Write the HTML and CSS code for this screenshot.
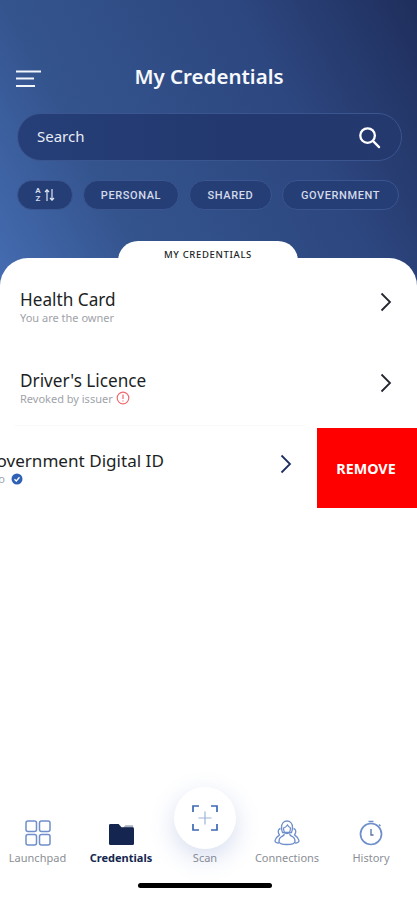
FILE: index.html

```html
<!DOCTYPE html>
<html lang="en">
<head>
  <meta charset="UTF-8" />
  <meta name="viewport" content="width=device-width, initial-scale=1.0"/>
  <title>My Credentials</title>
  <link rel="stylesheet" href="styles.css">
</head>
<body>

<div class="app">
  <header class="hero">
    <div class="topbar">
      <svg class="menu" width="26" height="19" viewBox="0 0 26 19">
        <path d="M0 1.500H25M0 8.500H18M0 16H19" stroke="#f2f5fb" stroke-width="2.200" fill="none"/>
      </svg>
      <h1>My Credentials</h1>
    </div>
    <div class="search">
      <span>Search</span>
      <svg width="23" height="23" viewBox="0 0 24 24" fill="none" stroke="#fff" stroke-width="2.400" stroke-linecap="round">
        <circle cx="10" cy="10" r="7.600"/>
        <path d="M15.800 15.800L22 22"/>
      </svg>
    </div>
    <div class="filters">
      <button class="chip sort">
        <span class="az">A<br>Z</span>
        <svg width="11" height="12" viewBox="0 0 11 12" fill="none" stroke="#dfe5f2" stroke-width="1.200">
          <path d="M3 12V1M1 3L3 .8L5 3M8 0V11M6 9L8 11.200L10 9"/>
        </svg>
      </button>
      <button class="chip personal">PERSONAL</button>
      <button class="chip shared">SHARED</button>
      <button class="chip government">GOVERNMENT</button>
    </div>
  </header>

  <main class="card">
    <div class="card-tab">MY CREDENTIALS</div>

    <div class="row">
      <div>
        <div class="row-title">Health Card</div>
        <div class="row-sub">You are the owner</div>
      </div>
      <svg class="chevron" width="12" height="20" viewBox="0 0 12 20"><path d="M1.500 1.500L10 10L1.500 18.500"/></svg>
    </div>

    <div class="row">
      <div>
        <div class="row-title">Driver's Licence</div>
        <div class="row-sub">Revoked by issuer
          <svg class="status" width="14" height="14" viewBox="0 0 14 14" fill="none" stroke="#ee6a70" stroke-width="1.200">
            <circle cx="7" cy="7" r="5.800"/>
            <path d="M7 3.500V8M7 9.400V10.600"/>
          </svg>
        </div>
      </div>
      <svg class="chevron" width="12" height="20" viewBox="0 0 12 20"><path d="M1.500 1.500L10 10L1.500 18.500"/></svg>
    </div>

    <div class="separator"></div>

    <div class="swipe">
      <div class="swipe-content">
        <div class="swipe-text">
          <div class="row-title">Government Digital ID</div>
          <div class="row-sub">Info
            <svg class="status" width="12" height="12" viewBox="0 0 12 12">
              <circle cx="6" cy="6" r="5.500" fill="#2f62b5"/>
              <path d="M3.500 6.200L5.300 8L8.500 4.300" stroke="#fff" stroke-width="1.300" fill="none"/>
            </svg>
          </div>
        </div>
        <svg class="chevron navy" width="12" height="20" viewBox="0 0 12 20"><path d="M1.500 1.500L10 10L1.500 18.500"/></svg>
      </div>
      <div class="remove">REMOVE</div>
    </div>
  </main>

  <nav class="tabs">
    <div class="tab">
      <svg width="26" height="26" viewBox="0 0 26 26" fill="none" stroke="#6f8fca" stroke-width="1.500">
        <rect x="1" y="1" width="10.500" height="10.500" rx="2"/>
        <rect x="14.500" y="1" width="10.500" height="10.500" rx="2"/>
        <rect x="1" y="14.500" width="10.500" height="10.500" rx="2"/>
        <rect x="14.500" y="14.500" width="10.500" height="10.500" rx="2"/>
      </svg>
      <span>Launchpad</span>
    </div>
    <div class="tab active">
      <svg width="25" height="23" viewBox="0 0 26 22">
        <path d="M15 3.500L17 1.500H25V6H15Z" fill="#a9b0bd"/>
        <path d="M1.500 0H10L13 3.500H24.500A1.500 1.500 0 0 1 26 5V20.500A1.500 1.500 0 0 1 24.500 22H1.500A1.500 1.500 0 0 1 0 20.500V1.500A1.500 1.500 0 0 1 1.500 0Z" fill="#14264f"/>
      </svg>
      <span>Credentials</span>
    </div>
    <div class="tab scan">
      <div class="scan-btn">
        <svg width="26" height="26" viewBox="0 0 26 26" fill="none" stroke-width="1.700">
          <path d="M1 7V1H7M19 1H25V7M25 19V25H19M7 25H1V19" stroke="#3d68b4"/>
          <path d="M13 6.500V19.500M6.500 13H19.500" stroke="#9fb3d8" stroke-width="1.200"/>
        </svg>
      </div>
      <span>Scan</span>
    </div>
    <div class="tab">
      <svg width="26" height="26" viewBox="0 0 26 26" fill="none" stroke="#6f8fca" stroke-width="1.300">
        <path d="M7.500 7.500C7.500 3.500 10 1 13 1C16 1 18.500 3.500 18.500 7.500C18.500 9.500 18 11 17.500 12.500H8.500C8 11 7.500 9.500 7.500 7.500Z"/>
        <path d="M9.500 8C11 7.500 12.500 6.500 13.500 5C14.500 6.500 15.500 7.500 16.500 8C16.500 11 15 13.500 13 13.500C11 13.500 9.500 11 9.500 8Z"/>
        <path d="M10.500 13.500C10.500 15.500 9 16 7 17C5.500 17.800 5 19.500 5 21.500C5 23.500 8 24.500 13 24.500C18 24.500 21 23.500 21 21.500C21 19.500 20.500 17.800 19 17C17 16 15.500 15.500 15.500 13.500"/>
        <path d="M6.500 8.500C4.500 9 3.800 11 4.500 13C4.800 14 5.500 14.500 5.500 15C4 16 1.500 17.500 1 20.500C1 22 3 23 5 23M19.500 8.500C21.500 9 22.200 11 21.500 13C21.200 14 20.500 14.500 20.500 15C22 16 24.500 17.500 25 20.500C25 22 23 23 21 23"/>
      </svg>
      <span>Connections</span>
    </div>
    <div class="tab">
      <svg width="24" height="26" viewBox="0 0 24 26" fill="none" stroke="#6f8fca" stroke-width="1.700">
        <circle cx="12" cy="14" r="10.500"/>
        <path d="M9.500 1.500H14.500M20 4.500L21.500 6" stroke-width="1.400"/>
        <path d="M12 9V15H14.500" stroke="#54709f" stroke-width="1.300"/>
      </svg>
      <span>History</span>
    </div>
  </nav>

  <div class="home-bar"></div>
</div>

</body>
</html>
```

FILE: styles.css

```css
* { box-sizing: border-box; }
html, body { margin: 0; height: 100%; }
body { font-family: 'Noto Sans', sans-serif; background: #fff; overflow: hidden; }
.app { height: 900px; display: flex; flex-direction: column; position: relative; }

/* header */
.hero {
  height: 300px; padding: 64px 15px 0 17px; color: #fff;
  background: linear-gradient(62deg, #466eb4 0%, #34548e 28%, #2d4780 68%, #1f2e5c 100%);
}
.topbar { height: 24px; display: flex; align-items: center; justify-content: center; position: relative; }
.menu { position: absolute; left: -1px; top: 6px; }
h1 { margin: 0 0 0 -1px; font-size: 20.500px; font-weight: 600; line-height: 24px; color: #f6f8fc; }

.search {
  margin-top: 25px; height: 48px; padding: 0 20px 0 19px;
  display: flex; align-items: center; justify-content: space-between;
  background: linear-gradient(90deg, #263f78, #22386e 60%, #24396e); border: 1px solid #3a558f; border-radius: 24px;
  font-size: 15px; color: #e8ecf5;
}
.search span { margin-top: -3px; }
.search svg { margin-top: 1px; }

.filters { margin-top: 19px; display: flex; gap: 10px; }
.chip {
  height: 30px; padding: 1px 0 0; border: 1px solid #3a558f; border-radius: 15px;
  background: #263e76; color: #d3daea;
  font-family: 'Roboto', sans-serif; font-size: 11px; font-weight: 500; letter-spacing: .6px;
  display: flex; align-items: center; justify-content: center;
}
.sort { width: 56px; gap: 3px; padding-top: 0; }
.az { font-size: 8px; line-height: 8px; text-align: center; letter-spacing: 0; font-weight: 700; }
.personal { width: 96px; }
.shared { width: 83px; }
.government { width: 117px; }

/* card */
.card {
  flex: 1; margin-top: -42px; padding-top: 1px; background: #fff;
  border-radius: 28px 28px 0 0; position: relative;
}
.card-tab {
  position: absolute; left: 118px; top: -17px; width: 180px; height: 30px;
  background: #fff; border-radius: 20px 20px 0 0; text-align: center;
  font-size: 9.500px; font-weight: 500; letter-spacing: .65px; line-height: 27px; color: #1c1f28;
}
.row {
  height: 80.500px; padding: 30px 25px 0 20px;
  display: flex; justify-content: space-between; align-items: flex-start;
}
.row-title { font-size: 17.200px; line-height: 22px; color: #1d1f24; }
.row-sub { font-size: 11px; line-height: 15px; color: #a0a3a9; display: flex; align-items: center; gap: 3px; margin-top: -1px; }
.chevron { margin-top: 3px; fill: none; stroke: #23262e; stroke-width: 1.800; }
.chevron.navy { stroke: #1f2f5e; }

.separator { height: 1px; margin: 5px 112px 2px 15px; background: #f8f8f9; }

.swipe { height: 81px; display: flex; overflow: hidden; }
.swipe-content {
  flex: none; width: 317px; padding: 22px 25px 0 0;
  display: flex; justify-content: space-between; align-items: flex-start;
}
.swipe-text { margin-left: -16px; }
.swipe-content .row-title { font-size: 17.100px; }
.swipe-content .row-sub { gap: 6px; }
.swipe-content .chevron { margin-top: 4px; }
.remove {
  flex: 1; height: 80px; padding-right: 2px; background: #fe0000; color: #fff;
  font-size: 14.300px; font-weight: 700; display: flex; align-items: center; justify-content: center;
}

/* bottom nav */
.tabs {
  position: absolute; left: 0; right: 0; bottom: 35px;
  display: grid; grid-template-columns: 75px 92px 76px 88px 80px; padding-right: 6px;
}
.tab {
  display: flex; flex-direction: column; align-items: center; justify-content: flex-end; gap: 5px;
  font-size: 11px; line-height: 14px; color: #8c8f96;
  height: 50px; position: relative;
}
.tab.active { color: #14264f; font-weight: 700; }
.scan-btn {
  position: absolute; top: -28px; width: 62px; height: 62px; border-radius: 50%;
  background: #fff; box-shadow: 0 8px 24px rgba(70, 100, 180, .22);
  display: flex; align-items: center; justify-content: center;
}
.home-bar {
  position: absolute; left: 138px; bottom: 12px; width: 134px; height: 5px;
  border-radius: 3px; background: #000;
}
```
